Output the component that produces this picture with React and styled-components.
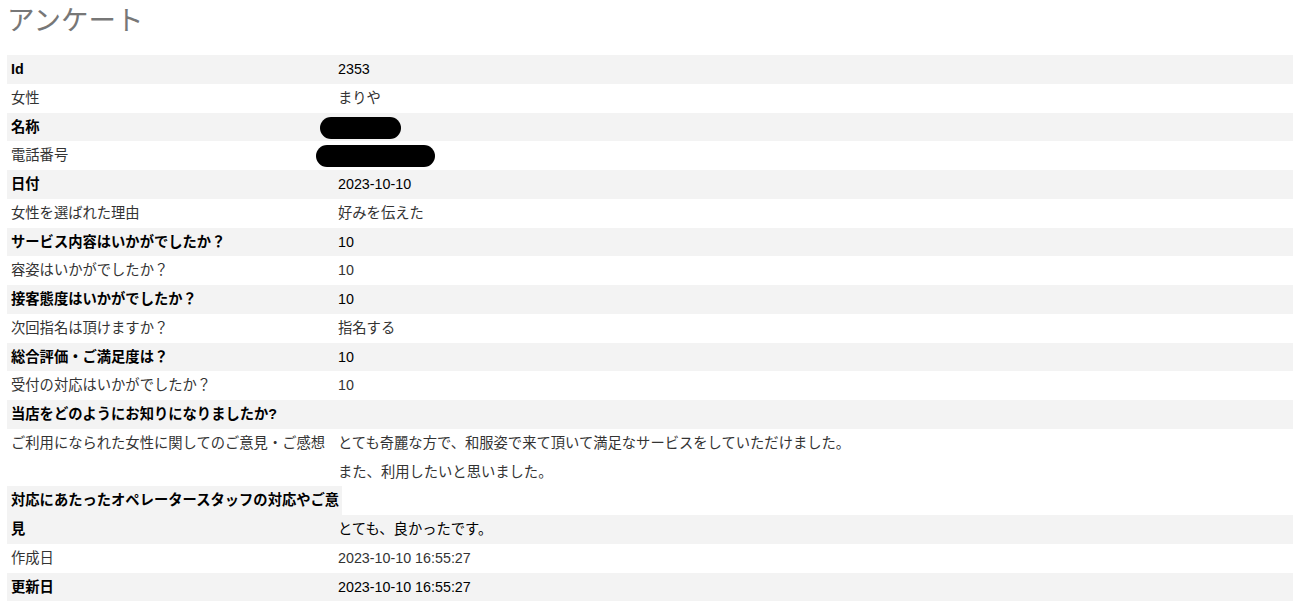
import React from 'react';
import styled, { createGlobalStyle } from 'styled-components';

const GlobalStyle = createGlobalStyle`
    body {
        margin: 0;
        background: #fff;
        font-family: "Liberation Sans", "Noto Sans CJK JP", sans-serif;
    }
`;

const rows = [
    { label: 'Id', value: '2353' },
    { label: '女性', value: 'まりや' },
    { label: '名称', mask: { width: 81, shift: -18 } },
    { label: '電話番号', mask: { width: 119, shift: -22 } },
    { label: '日付', value: '2023-10-10' },
    { label: '女性を選ばれた理由', value: '好みを伝えた' },
    { label: 'サービス内容はいかがでしたか？', value: '10' },
    { label: '容姿はいかがでしたか？', value: '10' },
    { label: '接客態度はいかがでしたか？', value: '10' },
    { label: '次回指名は頂けますか？', value: '指名する' },
    { label: '総合評価・ご満足度は？', value: '10' },
    { label: '受付の対応はいかがでしたか？', value: '10' },
    { label: '当店をどのようにお知りになりましたか?', value: '' },
    {
        label: 'ご利用になられた女性に関してのご意見・ご感想',
        lines: ['とても奇麗な方で、和服姿で来て頂いて満足なサービスをしていただけました。', 'また、利用したいと思いました。'],
    },
    { label: '対応にあたったオペレータースタッフの対応やご意見', value: 'とても、良かったです。', bottom: true },
    { label: '作成日', value: '2023-10-10 16:55:27' },
    { label: '更新日', value: '2023-10-10 16:55:27' },
];

function App() {
    return (
        <Page>
            <GlobalStyle />
            <Title>アンケート</Title>
            <List>
                {rows.map((row, i) => {
                    // odd entries (1st, 3rd, ...) get the grey band and bold label
                    const odd = i % 2 === 0;
                    return (
                        <Row key={row.label} $bottom={row.bottom}>
                            <Label $odd={odd}>{row.label}</Label>
                            <Value $odd={odd}>
                                {row.mask && <Mask $width={row.mask.width} $shift={row.mask.shift} />}
                                {row.lines
                                    ? row.lines.map((line, j) => <div key={j}>{line}</div>)
                                    : row.value}
                            </Value>
                        </Row>
                    );
                })}
            </List>
        </Page>
    );
}

const Page = styled.div`
    padding: 0 6px 0 7px;
`;

const Title = styled.h1`
    margin: 0 0 19px;
    font-size: 27.5px;
    line-height: 36px;
    font-weight: 400;
    color: #777;
    font-family: "Noto Sans CJK JP", sans-serif;
`;

const List = styled.div`
    display: flex;
    flex-direction: column;
`;

const Row = styled.div`
    display: flex;
    align-items: ${(p) => (p.$bottom ? 'flex-end' : 'stretch')};
    font-size: 14.3px;
    line-height: 28.75px;
`;

const Label = styled.div`
    width: 331px;
    flex-shrink: 0;
    padding-left: 4px;
    margin-right: -4px;
    font-weight: ${(p) => (p.$odd ? 700 : 400)};
    color: ${(p) => (p.$odd ? '#000' : '#333')};
    background: ${(p) => (p.$odd ? '#f3f3f3' : '#fff')};
`;

const Value = styled.div`
    flex: 1;
    min-height: 28.75px;
    color: ${(p) => (p.$odd ? '#000' : '#333')};
    background: ${(p) => (p.$odd ? '#f3f3f3' : '#fff')};
`;

const Mask = styled.span`
    display: inline-block;
    vertical-align: middle;
    width: ${(p) => p.$width}px;
    height: 22px;
    margin-left: ${(p) => p.$shift}px;
    border-radius: 11px;
    background: #000;
`;

export default App;
